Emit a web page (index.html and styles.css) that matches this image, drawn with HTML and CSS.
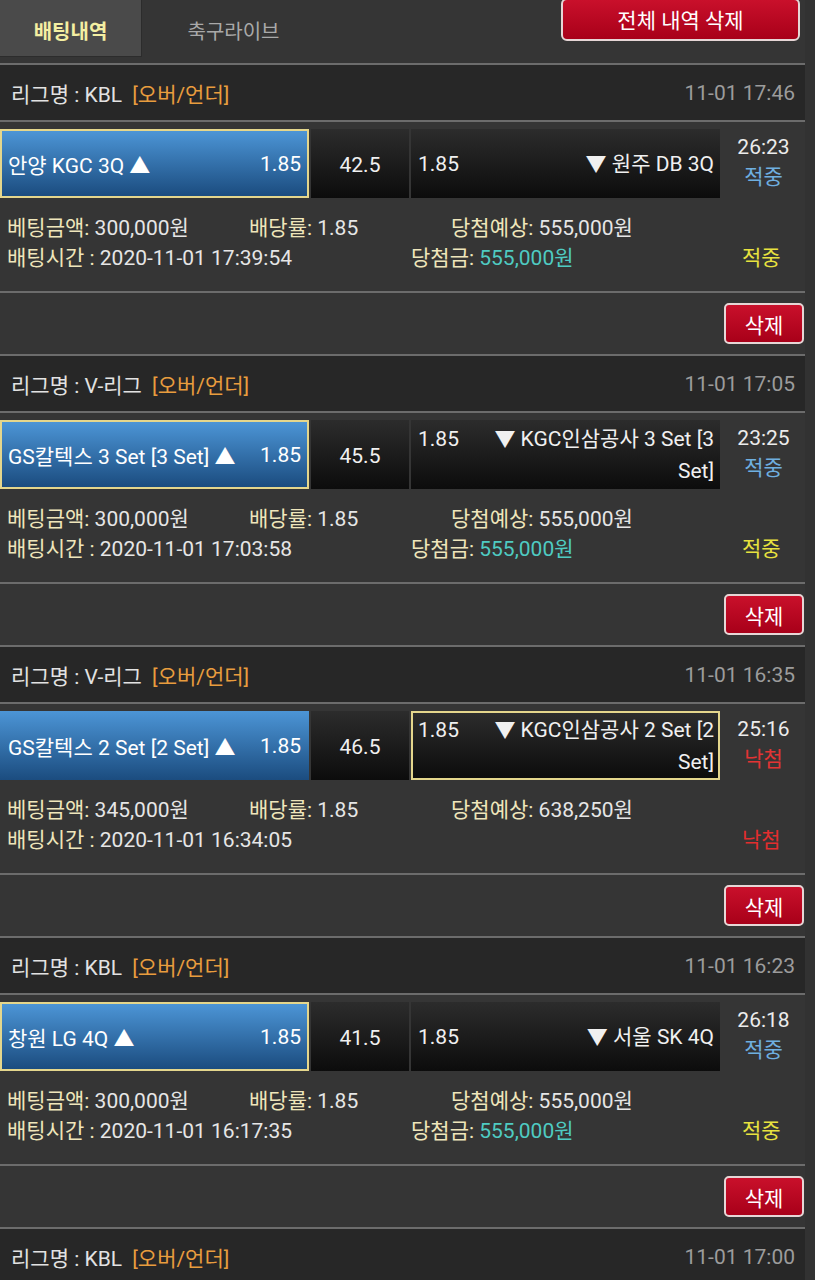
FILE: index.html
```html
<!DOCTYPE html>
<html lang="ko">
<head>
  <meta charset="UTF-8">
  <meta name="viewport" content="width=device-width, initial-scale=1.0">
  <title>배팅내역</title>
  <link rel="stylesheet" href="styles.css">
</head>
<body>
  <div class="page">
    <div class="top">
      <div class="tabs">
        <div class="tab active">배팅내역</div>
        <div class="tab">축구라이브</div>
      </div>
      <button class="btn-del-all">전체 내역 삭제</button>
    </div>

    <!-- 1 -->
    <div class="league">
      <div class="league-name">리그명 : KBL <span class="type">[오버/언더]</span></div>
      <div class="league-time">11-01 17:46</div>
    </div>
    <div class="bet">
      <div class="match">
        <div class="home picked"><span>안양 KGC 3Q ▲</span><span>1.85</span></div>
        <div class="line">42.5</div>
        <div class="away"><div class="away-in"><span class="odd">1.85</span>▼ 원주 DB 3Q</div></div>
        <div class="result"><div>26:23</div><div class="win">적중</div></div>
      </div>
      <div class="info">
        <div class="c1"><span class="lbl">베팅금액:</span> 300,000원</div>
        <div class="c2"><span class="lbl">배당률:</span> 1.85</div>
        <div><span class="lbl">당첨예상:</span> 555,000원</div>
      </div>
      <div class="info">
        <div class="d1"><span class="lbl">배팅시간 :</span> 2020-11-01 17:39:54</div>
        <div class="d2"><span class="lbl">당첨금:</span> <span class="paid">555,000원</span></div>
        <div class="st-win">적중</div>
      </div>
    </div>
    <div class="actions"><button class="btn-del">삭제</button></div>

    <!-- 2 -->
    <div class="league">
      <div class="league-name">리그명 : V-리그 <span class="type">[오버/언더]</span></div>
      <div class="league-time">11-01 17:05</div>
    </div>
    <div class="bet">
      <div class="match">
        <div class="home picked"><span>GS칼텍스 3 Set [3 Set] ▲</span><span>1.85</span></div>
        <div class="line">45.5</div>
        <div class="away"><div class="away-in"><span class="odd">1.85</span>▼ KGC인삼공사 3 Set [3 Set]</div></div>
        <div class="result"><div>23:25</div><div class="win">적중</div></div>
      </div>
      <div class="info">
        <div class="c1"><span class="lbl">베팅금액:</span> 300,000원</div>
        <div class="c2"><span class="lbl">배당률:</span> 1.85</div>
        <div><span class="lbl">당첨예상:</span> 555,000원</div>
      </div>
      <div class="info">
        <div class="d1"><span class="lbl">배팅시간 :</span> 2020-11-01 17:03:58</div>
        <div class="d2"><span class="lbl">당첨금:</span> <span class="paid">555,000원</span></div>
        <div class="st-win">적중</div>
      </div>
    </div>
    <div class="actions"><button class="btn-del">삭제</button></div>

    <!-- 3 -->
    <div class="league">
      <div class="league-name">리그명 : V-리그 <span class="type">[오버/언더]</span></div>
      <div class="league-time">11-01 16:35</div>
    </div>
    <div class="bet">
      <div class="match">
        <div class="home"><span>GS칼텍스 2 Set [2 Set] ▲</span><span>1.85</span></div>
        <div class="line">46.5</div>
        <div class="away picked"><div class="away-in"><span class="odd">1.85</span>▼ KGC인삼공사 2 Set [2 Set]</div></div>
        <div class="result"><div>25:16</div><div class="lose">낙첨</div></div>
      </div>
      <div class="info">
        <div class="c1"><span class="lbl">베팅금액:</span> 345,000원</div>
        <div class="c2"><span class="lbl">배당률:</span> 1.85</div>
        <div><span class="lbl">당첨예상:</span> 638,250원</div>
      </div>
      <div class="info">
        <div class="d1"><span class="lbl">배팅시간 :</span> 2020-11-01 16:34:05</div>
        <div class="d2"></div>
        <div class="st-lose">낙첨</div>
      </div>
    </div>
    <div class="actions"><button class="btn-del">삭제</button></div>

    <!-- 4 -->
    <div class="league">
      <div class="league-name">리그명 : KBL <span class="type">[오버/언더]</span></div>
      <div class="league-time">11-01 16:23</div>
    </div>
    <div class="bet">
      <div class="match">
        <div class="home picked"><span>창원 LG 4Q ▲</span><span>1.85</span></div>
        <div class="line">41.5</div>
        <div class="away"><div class="away-in"><span class="odd">1.85</span>▼ 서울 SK 4Q</div></div>
        <div class="result"><div>26:18</div><div class="win">적중</div></div>
      </div>
      <div class="info">
        <div class="c1"><span class="lbl">베팅금액:</span> 300,000원</div>
        <div class="c2"><span class="lbl">배당률:</span> 1.85</div>
        <div><span class="lbl">당첨예상:</span> 555,000원</div>
      </div>
      <div class="info">
        <div class="d1"><span class="lbl">배팅시간 :</span> 2020-11-01 16:17:35</div>
        <div class="d2"><span class="lbl">당첨금:</span> <span class="paid">555,000원</span></div>
        <div class="st-win">적중</div>
      </div>
    </div>
    <div class="actions"><button class="btn-del">삭제</button></div>

    <!-- 5 -->
    <div class="league">
      <div class="league-name">리그명 : KBL <span class="type">[오버/언더]</span></div>
      <div class="league-time">11-01 17:00</div>
    </div>
  </div>
</body>
</html>
```

FILE: styles.css
```css
body {
  margin: 0;
  background-color: #323232;
  font-family: Roboto, "Noto Sans CJK KR", sans-serif;
  font-size: 21px;
  color: #e6e6e6;
  height: 1280px;
  overflow: hidden;
}

.page {
  width: 805px;
  background-color: #353535;
  min-height: 1280px;
}

.top {
  display: flex;
  justify-content: space-between;
  height: 63px;
}

.tabs {
  display: flex;
  height: 57px;
}

.tab {
  width: 183px;
  display: flex;
  align-items: center;
  justify-content: center;
  color: #a9a9a9;
  padding-top: 4px;
  box-sizing: border-box;
  font-size: 20px;
}

.tab.active {
  width: 142px;
  background-color: #4a4a4a;
  color: #f4efa2;
  font-weight: bold;
  border-right: 1px solid #2c2c2c;
  border-bottom: 1px solid #2c2c2c;
}

.btn-del-all {
  margin-top: -2px;
  margin-right: 5px;
  width: 239px;
  height: 43px;
  border: 2px solid #e6d6d6;
  border-radius: 6px;
  background: linear-gradient(#c9102b, #a80019);
  color: #fff;
  font-family: inherit;
  font-size: 21px;
  padding: 0 0 2px;
}

.league {
  display: flex;
  justify-content: space-between;
  align-items: center;
  height: 55px;
  background-color: #272727;
  border-top: 2px solid #6c6c6c;
  padding: 0 10px 0 11px;
}

.league-name {
  color: #e2e2e2;
}

.type {
  color: #e89d3e;
  margin-left: 5px;
}

.league-time {
  color: #9c9c9c;
}

.bet {
  border-top: 2px solid #6c6c6c;
  height: 162px;
  padding-top: 7px;
}

.match {
  display: flex;
  height: 69px;
  gap: 2px;
}

.home {
  width: 309px;
  box-sizing: border-box;
  display: flex;
  justify-content: space-between;
  align-items: center;
  padding: 0 8px;
  background: linear-gradient(#4c95d6, #1b4c7f);
  color: #fff;
}

.home.picked {
  border: 2px solid #e4d68c;
  padding: 0 6px;
}

.line {
  width: 98px;
  display: flex;
  align-items: center;
  justify-content: center;
  padding-top: 2px;
  box-sizing: border-box;
  background: linear-gradient(#2c2c2c, #0c0c0c);
  color: #f0f0f0;
}

.away {
  width: 309px;
  box-sizing: border-box;
  display: flex;
  align-items: center;
  padding: 0 6px 0 7px;
  background: linear-gradient(#2c2c2c, #0c0c0c);
  color: #f0f0f0;
  line-height: 32px;
}

.away.picked {
  border: 2px solid #e4d68c;
  padding: 0 4px 0 5px;
}

.away-in {
  width: 100%;
  text-align: right;
}

.odd {
  float: left;
  margin-right: 22px;
}

.result {
  flex: 1;
  display: flex;
  flex-direction: column;
  justify-content: center;
  align-items: center;
  line-height: 30px;
  color: #ececec;
  margin-top: -4px;
}

.win {
  color: #6fafe0;
}

.lose {
  color: #e23434;
}

.info {
  display: flex;
  line-height: 30px;
  padding-left: 7px;
}

.match + .info {
  margin-top: 15px;
}

.lbl {
  color: #efe6bb;
}

.c1 { width: 242px; }
.c2 { width: 202px; }
.d1 { width: 404px; }
.d2 { width: 331px; }

.paid {
  color: #4fcbc2;
}

.st-win {
  color: #e8e23f;
}

.st-lose {
  color: #e22e2e;
}

.actions {
  height: 61px;
  border-top: 2px solid #6c6c6c;
  display: flex;
  justify-content: flex-end;
  align-items: flex-start;
}

.btn-del {
  margin-top: 10px;
  margin-right: 1px;
  width: 80px;
  height: 41px;
  border: 2px solid #e6d6d6;
  border-radius: 5px;
  background: linear-gradient(#c9102b, #a80019);
  color: #fff;
  font-family: inherit;
  font-size: 21px;
  padding: 0;
}
```
